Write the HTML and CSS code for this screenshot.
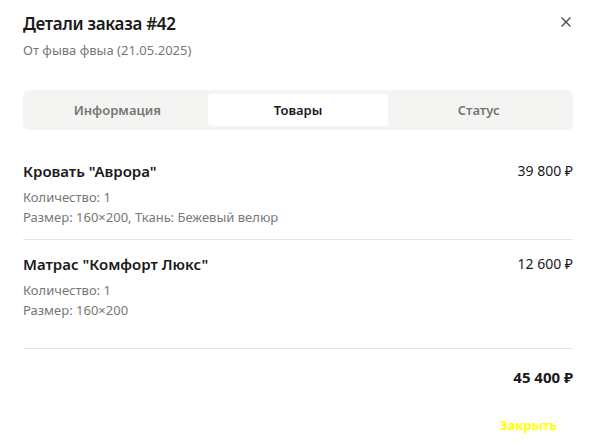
FILE: index.html
```html
<!DOCTYPE html>
<html lang="ru">
<head>
<meta charset="utf-8">
<link rel="stylesheet" href="styles.css">
</head>
<body>
<div class="modal">
  <header class="head">
    <div>
      <h1 class="title">Детали заказа #42</h1>
      <div class="subtitle">От фыва фвыа (21.05.2025)</div>
    </div>
    <button class="close" aria-label="Закрыть">
      <svg width="10" height="10" viewBox="0 0 10 10"><path d="M0.5 0.5L9.5 9.5M9.5 0.5L0.5 9.5" stroke="#444" stroke-width="1.3" fill="none"/></svg>
    </button>
  </header>
  <nav class="tabs">
    <div class="tab">Информация</div>
    <div class="tab active">Товары</div>
    <div class="tab">Статус</div>
  </nav>
  <div class="items">
    <div class="item">
      <div class="row">
        <div class="name">Кровать "Аврора"</div>
        <div class="price">39 800 ₽</div>
      </div>
      <div class="meta">Количество: 1</div>
      <div class="meta">Размер: 160×200, Ткань: Бежевый велюр</div>
    </div>
    <div class="item last">
      <div class="row">
        <div class="name">Матрас "Комфорт Люкс"</div>
        <div class="price">12 600 ₽</div>
      </div>
      <div class="meta">Количество: 1</div>
      <div class="meta">Размер: 160×200</div>
    </div>
  </div>
  <div class="total">45 400 ₽</div>
  <div class="actions"><button class="btn-close">Закрыть</button></div>
</div>
</body>
</html>
```
FILE: styles.css
```css
* { box-sizing: border-box; }
html, body { margin: 0; background: #fff; }
body { font-family: "Noto Sans", "Open Sans", sans-serif; color: #1a1a1a; }
.modal { width: 592px; height: 446px; padding: 0 19px 0 23px; display: flex; flex-direction: column; }
.head { display: flex; justify-content: space-between; align-items: flex-start; padding-top: 12px; }
.title { margin: 0; font-size: 17px; font-weight: 600; letter-spacing: -0.3px; line-height: 24px; color: #1a1a1a; }
.subtitle { margin-top: 5px; font-size: 13px; line-height: 18px; color: #777; }
.close { border: 0; background: none; padding: 0; margin: 4px 1px 0 0; width: 12px; height: 12px; display: flex; align-items: center; justify-content: center; cursor: pointer; }
.tabs { margin-top: 31px; width: 550px; height: 40px; background: #f4f4f3; border-radius: 6px; padding: 4px; display: grid; grid-template-columns: repeat(3, 1fr); }
.tab { display: flex; align-items: center; justify-content: center; font-size: 13px; font-weight: 600; color: #7a7573; border-radius: 4px; }
.tab.active { background: #fff; color: #1a1a1a; }
.items { width: 550px; margin-top: 31px; }
.item { border-bottom: 1px solid #e5e5e5; padding-bottom: 12px; }
.item + .item { padding-top: 14px; }
.item.last { padding-bottom: 28px; }
.row { display: flex; justify-content: space-between; align-items: center; margin-bottom: 6px; }
.name { font-size: 15px; font-weight: 600; line-height: 20px; }
.price { font-size: 14px; line-height: 20px; color: #1a1a1a; }
.meta { font-size: 13px; line-height: 20px; color: #777; }
.total { width: 550px; text-align: right; font-size: 15px; font-weight: 700; margin-top: 18px; line-height: 20px; }
.actions { width: 550px; display: flex; justify-content: flex-end; margin-top: 29px; }
.btn-close { border: 0; background: none; font-family: inherit; font-size: 13px; font-weight: 700; color: #ffff00; padding: 0 16px 0 0; cursor: pointer; line-height: 18px; }
```
